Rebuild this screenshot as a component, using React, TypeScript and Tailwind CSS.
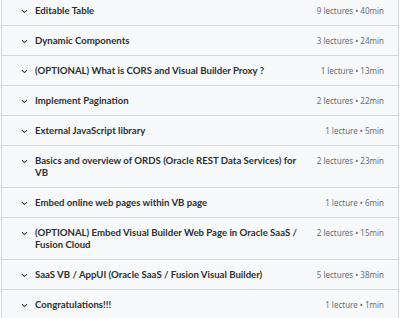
import React from "react";

type Section = { title: string; meta: string };

const sections: Section[] = [
  { title: "Editable Table", meta: "9 lectures • 40min" },
  { title: "Dynamic Components", meta: "3 lectures • 24min" },
  { title: "(OPTIONAL) What is CORS and Visual Builder Proxy ?", meta: "1 lecture • 13min" },
  { title: "Implement Pagination", meta: "2 lectures • 22min" },
  { title: "External JavaScript library", meta: "1 lecture • 5min" },
  { title: "Basics and overview of ORDS (Oracle REST Data Services) for VB", meta: "2 lectures • 23min" },
  { title: "Embed online web pages within VB page", meta: "1 lecture • 6min" },
  {
    title: "(OPTIONAL) Embed Visual Builder Web Page in Oracle SaaS / Fusion Cloud",
    meta: "2 lectures • 15min",
  },
  { title: "SaaS VB / AppUI (Oracle SaaS / Fusion Visual Builder)", meta: "5 lectures • 38min" },
  { title: "Congratulations!!!", meta: "1 lecture • 1min" },
];

function Chevron() {
  return (
    <svg width="7" height="5" viewBox="0 0 7 5" className="shrink-0 mt-[4px]">
      <path d="M1 1.2 L3.5 3.6 L6 1.2" fill="none" stroke="#3e4143" strokeWidth="1.1" />
    </svg>
  );
}

export default function App() {
  return (
    <div className="w-[400px] h-[318px] overflow-hidden bg-white">
      <div
        className="ml-[1px] w-[398px] -mt-[5px] border-x border-b border-[#d1d7dc]"
        style={{ fontFamily: "'Noto Sans', 'Liberation Sans', sans-serif" }}
      >
        {sections.map((s) => (
          <div
            key={s.title}
            className="flex items-start bg-[#f7f9fa] border-t border-[#d1d7dc] pl-[19px] pr-[14px] py-[8.5px]"
          >
            <Chevron />
            <div className="flex-1 pl-[7px] pr-[14px] text-[9.6px] leading-[12px] font-bold text-[#2d2f31] font-['Lato',sans-serif]">
              {s.title}
            </div>
            <div className="shrink-0 text-[8px] leading-[12px] text-[#6a6f73]">{s.meta}</div>
          </div>
        ))}
      </div>
    </div>
  );
}
